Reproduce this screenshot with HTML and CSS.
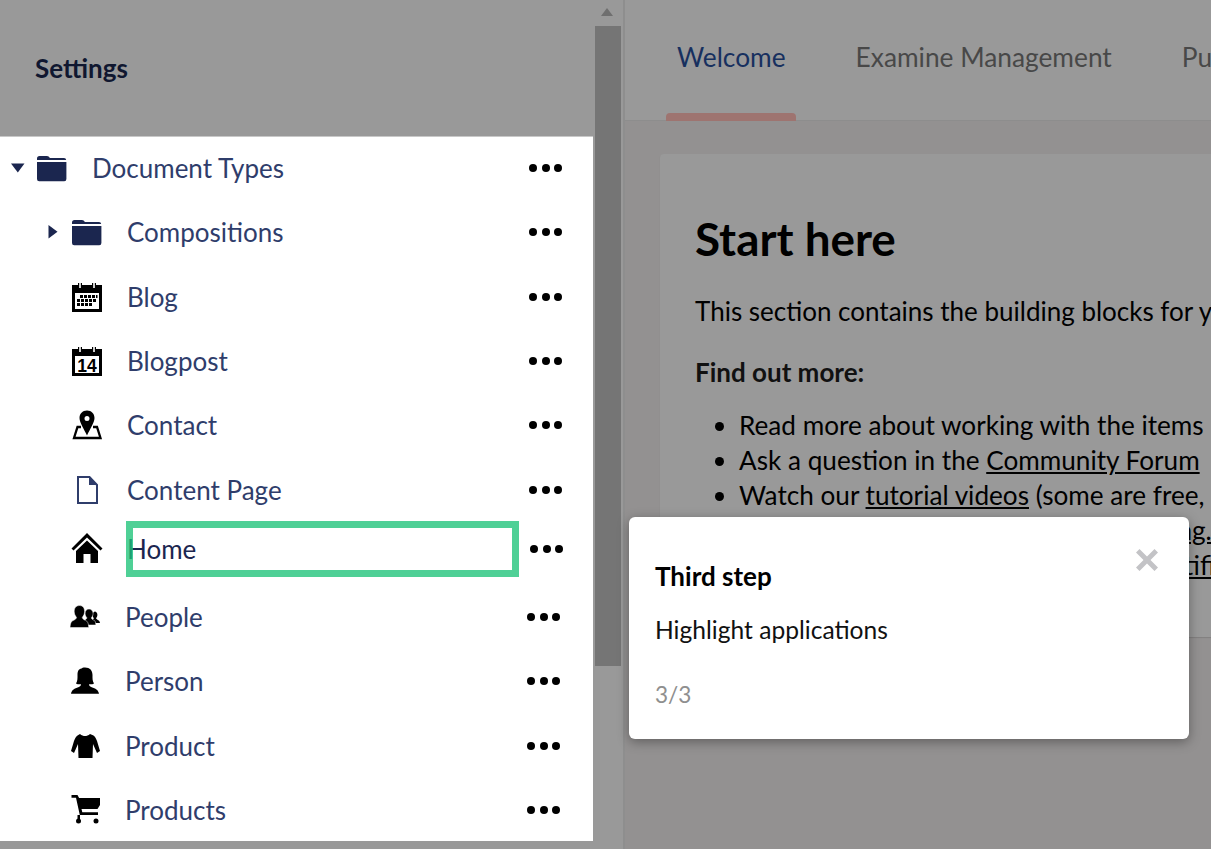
FILE: index.html
```html
<!DOCTYPE html>
<html lang="en">
<head>
<meta charset="utf-8">
<title>Settings</title>
<link rel="stylesheet" href="styles.css">
</head>
<body>
<div class="app">
  <aside class="sidebar">
    <header class="side-head"><h1 class="side-title">Settings</h1></header>
    <ul class="tree">
      <li class="row root">
        <span class="caret"><svg width="14" height="10" viewBox="0 0 14 10"><path d="M0 .5h13.500L6.800 9.500z"/></svg></span>
        <svg class="icon navy" viewBox="0 0 30 30"><path d="M0 5.500Q0 3 2.500 3H10q2 0 2.500 1.500l.4.6H27q2 0 2.200 1.900H0zM0 9h29.400v17q0 2.200-2.200 2.200H2.200Q0 28.200 0 26z"/></svg>
        <span class="label">Document Types</span>
        <span class="dots"><i></i><i></i><i></i></span>
      </li>
      <li class="row">
        <span class="caret"><svg width="10" height="14" viewBox="0 0 10 14"><path d="M.5 0v13.500L9.500 6.800z"/></svg></span>
        <svg class="icon navy" viewBox="0 0 30 30"><path d="M0 5.500Q0 3 2.500 3H10q2 0 2.500 1.500l.4.6H27q2 0 2.200 1.900H0zM0 9h29.400v17q0 2.200-2.200 2.200H2.200Q0 28.200 0 26z"/></svg>
        <span class="label">Compositions</span>
        <span class="dots"><i></i><i></i><i></i></span>
      </li>
      <li class="row">
        <span class="caret"></span>
        <svg class="icon" viewBox="0 0 30 30"><path fill-rule="evenodd" d="M0 3h6V1h4v2h10V1h4v2h6v27H0zM3 11v16h24V11z"/><path fill="#fff" d="M7 0h2v6H7zM21 0h2v6h-2z" opacity=".8"/><path d="M8 13h3v3H8zM12 13h3v3h-3zM16 13h3v3h-3zM20 13h3v3h-3zM24 13h1.500v3H24zM5 17h3v3H5zM9 17h3v3H9zM13 17h3v3h-3zM17 17h3v3h-3zM21 17h3v3h-3zM5 21h3v3H5zM9 21h3v3H9zM13 21h3v3h-3zM17 21h3v3h-3z"/></svg>
        <span class="label">Blog</span>
        <span class="dots"><i></i><i></i><i></i></span>
      </li>
      <li class="row">
        <span class="caret"></span>
        <svg class="icon" viewBox="0 0 30 30"><path fill-rule="evenodd" d="M0 3h6V1h4v2h10V1h4v2h6v27H0zM3 10v17h24V10z"/><path fill="#fff" d="M7 0h2v6H7zM21 0h2v6h-2z" opacity=".8"/><text class="cal-num" x="15" y="25.500" text-anchor="middle">14</text></svg>
        <span class="label">Blogpost</span>
        <span class="dots"><i></i><i></i><i></i></span>
      </li>
      <li class="row">
        <span class="caret"></span>
        <svg class="icon" viewBox="0 0 30 30"><path fill-rule="evenodd" d="M15 .5C10.500.5 7.500 3.800 7.500 8c0 4.500 4.500 11 7.500 17.500C18 19 22.500 12.500 22.500 8 22.500 3.800 19.500.5 15 .5zm0 5.500a2.500 2.500 0 1 1 0 5 2.500 2.500 0 0 1 0-5z"/><path fill="none" stroke="#000" stroke-width="2.300" d="M9 17H5.500L2 28h26.500L25 17h-4"/></svg>
        <span class="label">Contact</span>
        <span class="dots"><i></i><i></i><i></i></span>
      </li>
      <li class="row">
        <span class="caret"></span>
        <svg class="icon" viewBox="0 0 30 30"><path fill="none" stroke="#2f3d6b" stroke-width="2" d="M6 2h11.500L25 10v18H6z"/><path fill="#2f3d6b" d="M17 2l8 8h-8z"/></svg>
        <span class="label">Content Page</span>
        <span class="dots"><i></i><i></i><i></i></span>
      </li>
      <li class="row home">
        <span class="caret"></span>
        <svg class="icon" viewBox="0 0 30 30"><path d="M15 0L-.500 15.500l2 2L15 4.500l13.500 13 2-2z"/><path d="M15 7.500L4 18v12h7.500v-9h7v9H26V18z"/></svg>
        <span class="label">Home</span>
        <span class="dots"><i></i><i></i><i></i></span>
        <span class="highlight"></span>
      </li>
      <li class="row shift">
        <span class="caret"></span>
        <svg class="icon" viewBox="0 0 30 30"><path d="M25.500 9.500c-1.800 0-3 1.300-3 3.200 0 1.400.6 2.600 1.300 3.400-.1 1-.7 1.300-1.700 1.800-1.100.5-1.800 1.200-2 3h9.900c-.3-1.700-.9-2.500-2.100-3-1.100-.5-1.700-.8-1.800-1.800.7-.8 1.300-2 1.300-3.400 0-1.900-1.100-3.200-2.900-3.200z"/><path stroke="#fff" stroke-width=".5" d="M19 7c-2.400 0-3.900 1.700-3.900 4.200 0 1.800.7 3.400 1.700 4.500-.1 1.300-.8 1.600-2 2.200-1.400.6-2.200 1.500-2.500 5.100h13.600c-.3-3.600-1.100-4.500-2.500-5.100-1.200-.6-1.900-.9-2-2.200 1-1.100 1.700-2.700 1.700-4.500C22.900 8.700 21.400 7 19 7z"/><path stroke="#fff" stroke-width=".5" d="M9.500 3.500c-3.400 0-5.300 2.300-5.300 5.800 0 2.400 1 4.600 2.300 6-.2 1.700-1.200 2.200-3.200 3.100C1.300 19.300.4 20.800 0 25.500h18.800c-.4-4.700-1.300-6.200-3.300-7.100-2-.9-3-1.400-3.200-3.100 1.300-1.400 2.300-3.600 2.300-6 0-3.500-1.700-5.800-5.100-5.800z"/></svg>
        <span class="label">People</span>
        <span class="dots"><i></i><i></i><i></i></span>
      </li>
      <li class="row shift">
        <span class="caret"></span>
        <svg class="icon" viewBox="0 0 30 30"><path d="M15 1.500c-2 0-3 .5-3.500 1-3 .3-4 3-4 6.500 0 3 .2 6-1.500 8.500 1.500 1 3.500 1 5 .7-.2 1.800-1 2.300-4 3.500-3.800 1.500-5.300 2.700-6 6h28c-.7-3.300-2.200-4.500-6-6-3-1.200-3.800-1.700-4-3.500 1.500.3 3.500.3 5-.7-1.700-2.500-1.500-5.500-1.500-8.500 0-4.500-2.500-7.500-7.500-7.500z"/></svg>
        <span class="label">Person</span>
        <span class="dots"><i></i><i></i><i></i></span>
      </li>
      <li class="row shift">
        <span class="caret"></span>
        <svg class="icon" viewBox="0 0 30 30"><path d="M10 3c1.500 1.500 3.500 2 5 2s3.500-.5 5-2l3.500 1.500c1.700 1 2.500 3 3.500 5.500l3 10-3 2-4-9-.5 14H8.500L8 13l-4 9-3-2 3-10c1-2.500 1.800-4.500 3.500-5.500z"/></svg>
        <span class="label">Product</span>
        <span class="dots"><i></i><i></i><i></i></span>
      </li>
      <li class="row shift">
        <span class="caret"></span>
        <svg class="icon" viewBox="0 0 30 30"><path d="M1.500 0h6l1.600 3H30v7l-2.500 4H11.500l.8 3.200H28V20H9.800L6 2.800H1.500z"/><circle cx="8.500" cy="26" r="2.500"/><circle cx="26" cy="26" r="2.500"/><path d="M7.500 20h2.500v4H7.500z"/></svg>
        <span class="label">Products</span>
        <span class="dots"><i></i><i></i><i></i></span>
      </li>
    </ul>
  </aside>
  <div class="scrollbar">
    <span class="scroll-arrow"></span>
    <span class="scroll-thumb"></span>
  </div>
  <main class="main">
    <nav class="tabs">
      <a class="tab active">Welcome<span class="tab-mark"></span></a>
      <a class="tab">Examine Management</a>
      <a class="tab">Published Status</a>
    </nav>
    <div class="content">
      <section class="card">
        <h2 class="card-title">Start here</h2>
        <p class="para">This section contains the building blocks for your Umbraco site.</p>
        <p class="para strong">Find out more:</p>
        <ul class="links">
          <li>Read more about working with the items in Settings</li>
          <li>Ask a question in the <a class="link">Community Forum</a></li>
          <li>Watch our <a class="link">tutorial videos</a> (some are free, some require a subscription)</li>
          <li>Find out more about <a class="link">our real-life training.</a></li>
          <li>Get started with our new <a class="link">Umbraco Certification</a></li>
        </ul>
      </section>
    </div>
  </main>
</div>
<div class="tour">
  <button class="tour-close" aria-label="Close"><svg width="22" height="22" viewBox="0 0 22 22"><path d="M3.500 0L11 7.500 18.500 0 22 3.500 14.500 11 22 18.500 18.500 22 11 14.500 3.500 22 0 18.500 7.500 11 0 3.500z"/></svg></button>
  <h3 class="tour-title">Third step</h3>
  <p class="tour-text">Highlight applications</p>
  <p class="tour-count">3/3</p>
</div>
</body>
</html>
```
FILE: styles.css
```css
* { box-sizing: border-box; }
html, body { margin: 0; height: 100%; }
body {
  position: relative;
  overflow: hidden;
  background: #999;
  font-family: Lato, "Open Sans", sans-serif;
  font-size: 26px;
  color: #000;
  text-rendering: optimizeLegibility;
  font-variant-ligatures: common-ligatures;
}
.app { display: flex; height: 849px; }

.sidebar { width: 593px; flex: none; }
.side-head { height: 136px; background: #999; padding: 51px 0 0 35px; }
.side-title { margin: 0; font-size: 26px; line-height: 35px; font-weight: 700; color: #101730; }
.tree {
  margin: 0;
  padding: 0;
  list-style: none;
  height: 705px;
  overflow: hidden;
  background: #fff;
  box-shadow: inset 0 1px 0 #c8c8c8;
}

.row {
  position: relative;
  display: flex;
  align-items: center;
  height: 64.3px;
  padding: 0 31px 0 46px;
}
.row.root { padding-left: 11px; }
.row.home { height: 63px; padding-right: 30px; align-items: flex-start; padding-top: 11px; }
.row.shift { padding-left: 44px; padding-right: 33px; }
.caret { width: 26px; flex: none; display: flex; align-items: center; }
.caret svg { display: block; fill: #1b264f; margin-left: 2px; }
.root .caret svg { margin-left: 0; }
.icon { width: 30px; height: 30px; flex: none; overflow: visible; fill: #000; }
.icon.navy { fill: #1b264f; }
.cal-num { font-family: "Liberation Sans", sans-serif; font-size: 17.500px; font-weight: 700; }
.label { margin: 0 0 0 25px; color: #2f3d6b; line-height: 34px; }
.home .label { margin-top: 0; color: #1b264f; line-height: 32px; }
.dots { margin-left: auto; display: flex; gap: 4.500px; }
.home .dots { margin-top: 12px; }
.dots i { width: 8px; height: 8px; border-radius: 50%; background: #000; }
.highlight {
  position: absolute;
  left: 126px;
  top: -.5px;
  width: 393px;
  height: 56px;
  border: 7px solid rgba(30, 195, 120, .78);
}

.scrollbar { width: 32px; flex: none; position: relative; background: #999; border-right: 2px solid #8e8e8e; }
.scroll-arrow {
  position: absolute;
  left: 8px;
  top: 8px;
  border-left: 6.500px solid transparent;
  border-right: 6.500px solid transparent;
  border-bottom: 8px solid #6f6f6f;
}
.scroll-thumb {
  position: absolute;
  left: 2px;
  top: 26px;
  width: 26px;
  height: 640px;
  background: #757575;
}

.main { flex: 1; min-width: 0; background: #939191; overflow: hidden; }
.tabs {
  display: flex;
  gap: 70px;
  height: 121px;
  padding: 38px 0 0 52px;
  background: #999;
  border-bottom: 1px solid #8d8d8d;
  font-size: 26.300px;
  white-space: nowrap;
}
.tab { position: relative; color: #484848; line-height: 38px; }
.tab.active { color: #17305f; }
.tab-mark {
  position: absolute;
  left: -11px;
  right: -10px;
  top: 75px;
  height: 8px;
  background: #9e7470;
  border-radius: 4px 4px 0 0;
}
.content { padding: 33px 0 0 35px; }
.card {
  height: 483px;
  width: 700px;
  padding: 54px 0 0 35px;
  background: #999;
  border-radius: 4px;
  box-shadow: 0 1px 1px rgba(0, 0, 0, .12);
  white-space: nowrap;
}
.card-title { margin: 0 0 24px; font-size: 45.800px; line-height: 62px; font-weight: 700; color: #000; }
.para { margin: 0 0 26px; line-height: 35px; color: #000; }
.para.strong { font-weight: 700; color: #111; margin-bottom: 18px; }
.links { margin: 0; padding: 0 0 0 44px; font-size: 26.150px; line-height: 35px; }
.link { color: #000; text-decoration: underline; }

.tour {
  position: absolute;
  left: 629px;
  top: 517px;
  width: 560px;
  height: 222px;
  padding: 42px 27px 0 26px;
  background: #fff;
  border-radius: 6px;
  box-shadow: 0 3px 12px rgba(0, 0, 0, .35);
}
.tour-close {
  position: absolute;
  right: 31px;
  top: 32px;
  padding: 0;
  width: 22px;
  height: 22px;
  border: 0;
  background: none;
}
.tour-close svg { display: block; fill: #c3c3c6; }
.tour-title { margin: 0 0 20px; font-size: 26px; line-height: 34px; font-weight: 700; color: #000; }
.tour-text { margin: 0 0 31px; font-size: 24.600px; line-height: 34px; color: #111; }
.tour-count { margin: 0; font-size: 22.600px; line-height: 34px; color: #8f8f8f; }
```
